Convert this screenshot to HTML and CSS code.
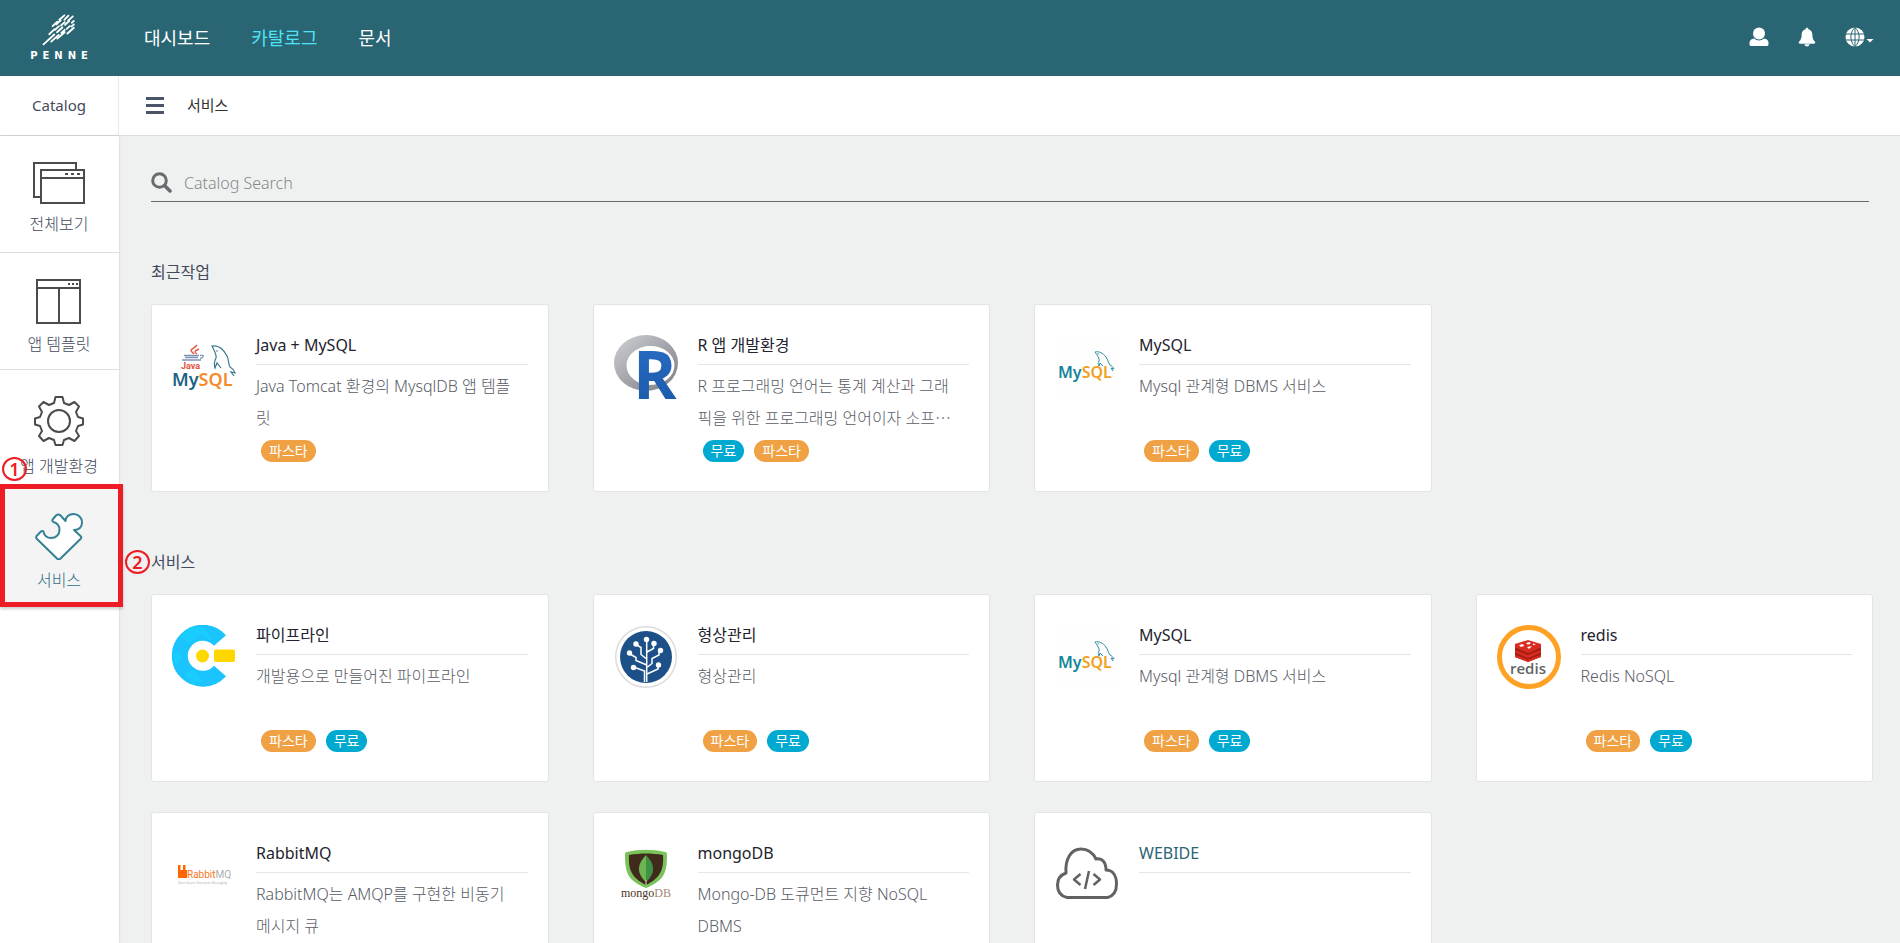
FILE: index.html
```html
<!DOCTYPE html>
<html lang="ko">
<head>
<meta charset="utf-8">
<meta name="viewport" content="width=device-width, initial-scale=1">
<title>PENNE Catalog</title>
<link rel="stylesheet" href="styles.css">
</head>
<body>
<header class="topbar">
  <a class="brand" href="#" aria-label="PENNE">
    <svg width="36" height="32" viewBox="130 40 104 95" fill="none" stroke="#fff" stroke-width="5.500" stroke-linecap="round" aria-hidden="true">
      <path d="M136 130l32-29M159 122l22-20M177 113l22-19M153 100l16-15M163 76l14-13M183 57l15-13M174 71l13-12M198 57l12-12M170 87l12-11M188 74l11-10M209 60l14-13M176 94l16-14M200 72l12-11M220 66l6-5M189 96l10-9M205 84l9-8M219 77l7-6M207 98l19-17"/>
    </svg>
    <span class="brand-name">PENNE</span>
  </a>
  <nav class="mainnav">
    <a href="#">대시보드</a>
    <a href="#" class="current">카탈로그</a>
    <a href="#">문서</a>
  </nav>
  <div class="tools">
    <button type="button" aria-label="사용자"><svg width="20" height="20" viewBox="0 0 20 20" fill="#fff"><circle cx="10" cy="6.500" r="6"/><path d="M5 11.500c3 2.600 7 2.600 10 0 3 .3 4.500 2 4.500 4.500v1.200c0 1-.7 1.800-1.700 1.800H2.200C1.200 19 .5 18.200.5 17.200V16c0-2.500 1.500-4.200 4.500-4.500z"/></svg></button>
    <button type="button" aria-label="알림"><svg width="18" height="20" viewBox="0 0 18 20" fill="#fff"><path d="M9 .8c.8 0 1.400.6 1.400 1.400 2.600.7 4 2.800 4 5.600 0 4 1.200 5.400 2.400 6.700.9 1 .3 2.300-.9 2.300H2.100c-1.200 0-1.800-1.300-.9-2.300 1.200-1.300 2.400-2.700 2.400-6.700 0-2.800 1.400-4.900 4-5.600C7.600 1.400 8.200.8 9 .8zM6.500 17.300h5c0 1.300-1.100 2.200-2.500 2.200s-2.500-.9-2.500-2.200z"/></svg></button>
    <button type="button" aria-label="언어"><svg width="29" height="20" viewBox="0 0 29 20"><circle cx="10" cy="10" r="9.500" fill="#fff"/><path d="M1 7h18M1 13h18M10 0v20M10 .5c-5.500 5-5.500 14 0 19M10 .5c5.500 5 5.500 14 0 19" fill="none" stroke="#2a6574" stroke-width="1"/><path d="M21.500 12h7L25 15.500z" fill="#fff"/></svg></button>
  </div>
</header>
<div class="subbar">
  <div class="subbar-label">Catalog</div>
  <button class="menu" type="button" aria-label="메뉴"><span></span><span></span><span></span></button>
  <h1>서비스</h1>
</div>
<div class="shell">
  <nav class="side">
    <a href="#">
      <svg width="52" height="42" viewBox="0 0 52 42" fill="none" stroke="#4b4b4b" stroke-width="2"><path d="M43 7V1H1v34h6M8 8h43v33H8zM8 16h43"/><path d="M32 12h3M38 12h3M44 12h3"/></svg>
      <span>전체보기</span>
    </a>
    <a href="#">
      <svg width="46" height="45" viewBox="0 0 46 45" fill="none" stroke="#4b4b4b" stroke-width="2"><path d="M1 1h43v43H1zM1 9h43M23 9v35"/><path d="M32 5h2M36 5h2M40 5h2"/></svg>
      <span>앱 템플릿</span>
    </a>
    <a href="#">
      <svg width="50" height="50" viewBox="0 0 50 50" fill="none" stroke="#4b4b4b" stroke-width="2" stroke-linejoin="round"><circle cx="25" cy="25" r="11"/><path d="M21.500 1h7l1.500 6 5 2 5.500-3 4.500 4.500-3 5.500 2 5 5 1.500v6L44 30l-2 5 3 5-4.500 5-5.500-3-5 2-1.500 5h-7L20 44l-5-2-5.500 3L5 40l3-5-2-5-5-1.500v-6L6 21l2-5-3-5.500L9.500 6 15 9l5-2z"/></svg>
      <span>앱 개발환경</span>
      <b class="mark mark-one">1</b>
    </a>
    <a href="#" class="active" aria-current="page">
      <svg width="48" height="47" viewBox="0 0 48 47" fill="#fff" stroke="#348094" stroke-width="2" stroke-linejoin="round"><path d="M21 2.500c1.500-1.500 3-1.500 4.500 0l5 5.500c0-4 3.500-7 8-7 5 0 8.500 4 8.500 8.500 0 5-3.500 7.500-8 7.500l6.500 6c1 1 1 2 0 3L25.500 45.500c-1 1-2.500 1-3.500 0L2 26c-1-1-1-2.500 0-3.500l4-4c1-1 2.500-.5 2.500.5 1 4 4 6 7.500 6 5 0 8.500-3.500 8.500-8 0-4-2.500-7-6-8-1.500-.5-1.500-2-.5-3z"/></svg>
      <span>서비스</span>
    </a>
  </nav>
  <main>
    <form class="search" role="search">
      <label for="q" aria-label="검색"><svg width="21" height="21" viewBox="0 0 21 21" fill="none" stroke="#686c6f"><circle cx="8.500" cy="8.500" r="6.800" stroke-width="3"/><path d="M13.500 13.500l5.500 5.500" stroke-width="3.500" stroke-linecap="round"/></svg></label>
      <input id="q" type="text" placeholder="Catalog Search">
    </form>
    <section>
      <h2>최근작업</h2>
      <div class="grid">
        <article class="card">
          <svg class="logo" viewBox="0 0 64 64" aria-hidden="true">
            <g fill="none" stroke="#e2553f" stroke-width="1.400"><path d="M25 10c-3 4-8 4-5 7l2 2M27 14c-5 2-5 3-2 5"/></g>
            <path d="M12 20.500h15M13 22.500h13M10 25h19M28 20.500c5-1 4 2 0 3" fill="none" stroke="#7f95b8" stroke-width="1.300"/>
            <text x="9" y="34" class="logo-java">Java</text>
            <text x="0" y="51" class="logo-mysql-lg"><tspan fill="#1c6284">My</tspan><tspan fill="#f68b2c">SQL</tspan></text>
            <path d="M44 23c-2 4-2 7-1 10l2-5 4 5M44 23c1-3-2-8-4-12 7-1 12 4 15 10 2 4 1 7 3 11 2 1 4 3 5 6l-4-1 3 4" fill="none" stroke="#3c7590" stroke-width="1.200"/>
            <circle cx="45" cy="16" r=".8" fill="#3c7590"/>
          </svg>
          <div class="body">
            <h3><a href="#">Java + MySQL</a></h3>
            <p>Java Tomcat 환경의 MysqlDB 앱 템플릿</p>
            <div class="tags"><span class="tag pasta">파스타</span></div>
          </div>
        </article>
        <article class="card">
          <svg class="logo" viewBox="0 0 64 64" aria-hidden="true">
            <linearGradient id="ring" x1="0" y1="0" x2="1" y2="1"><stop offset="0" stop-color="#cdd0d4"/><stop offset="1" stop-color="#7c7b82"/></linearGradient>
            <linearGradient id="blue" x1="0" y1="0" x2="0" y2="1"><stop offset="0" stop-color="#2a6fc9"/><stop offset="1" stop-color="#1a57a5"/></linearGradient>
            <path fill="url(#ring)" fill-rule="evenodd" d="M32 0a32 28 0 1 1 0 56a32 28 0 1 1 0-56zM36.500 11a24 19.500 0 1 0 0 39a24 19.500 0 1 0 0-39z"/>
            <text x="19" y="64" class="logo-r">R</text>
          </svg>
          <div class="body">
            <h3><a href="#">R 앱 개발환경</a></h3>
            <p>R 프로그래밍 언어는 통계 계산과 그래픽을 위한 프로그래밍 언어이자 소프⋯</p>
            <div class="tags"><span class="tag free">무료</span><span class="tag pasta">파스타</span></div>
          </div>
        </article>
        <article class="card">
          <svg class="logo" viewBox="0 0 64 64" aria-hidden="true">
            <rect width="64" height="64" fill="#fdfefd"/>
            <text x="3" y="43" class="logo-mysql"><tspan fill="#12869a">My</tspan><tspan fill="#f3a01f">SQL</tspan></text>
            <path d="M44 26c-1 2-1 3 0 5l1-3 3 3M44 26c1-2-2-6-4-9 4-1 8 1 11 5 2 3 2 5 4 8 2 1 3 2 4 4l-3-1 2 3" fill="none" stroke="#2a8fa3"/>
            <circle cx="43" cy="19" r=".7" fill="#2a8fa3"/>
          </svg>
          <div class="body">
            <h3><a href="#">MySQL</a></h3>
            <p>Mysql 관계형 DBMS 서비스</p>
            <div class="tags"><span class="tag pasta">파스타</span><span class="tag free">무료</span></div>
          </div>
        </article>
      </div>
    </section>
    <section>
      <h2>서비스<b class="mark mark-two">2</b></h2>
      <div class="grid">
        <article class="card">
          <svg class="logo" viewBox="0 0 64 64" aria-hidden="true">
            <path d="M48 15.500a23 23 0 1 0 0 30.500" fill="none" stroke="#1cc4fd" stroke-width="16"/>
            <path d="M8 12l10 6 10-9 12 7-8-14H18zM1 27l9 5-7 8zM12 49l10-4 8 11-9 3z" fill="#18d3ff" opacity=".7"/>
            <circle cx="30.500" cy="31" r="6.500" fill="#ffd700"/><rect x="42" y="24.500" width="21" height="12.500" rx="2" fill="#ffd700"/>
          </svg>
          <div class="body">
            <h3><a href="#">파이프라인</a></h3>
            <p>개발용으로 만들어진 파이프라인</p>
            <div class="tags"><span class="tag pasta">파스타</span><span class="tag free">무료</span></div>
          </div>
        </article>
        <article class="card">
          <svg class="logo" viewBox="0 0 64 64" aria-hidden="true">
            <circle cx="32" cy="32" r="30.300" fill="#fff" stroke="#dcdcdc" stroke-width="1.500"/><circle cx="32" cy="32" r="26" fill="#1d5088"/>
            <g fill="none" stroke="#fff" stroke-width="1.500"><path d="M32.700 57V16M30.500 57V46l-9.500-3.500M32.700 40L22 35.500v-3L16 29M32 33.500l-5-4v-7L22 19.500M33 27l6.500-3.500v-4M33.500 42l4.500-3.500v-5l7-3.500v-4M33 49l11-5v-3.500"/></g>
            <g fill="#fff"><circle cx="32.500" cy="14.500" r="2.700"/><circle cx="22" cy="19" r="2.700"/><circle cx="40" cy="18.500" r="2.700"/><circle cx="15.500" cy="28" r="2.700"/><circle cx="46.500" cy="25.500" r="2.700"/><circle cx="19.500" cy="42.500" r="2.700"/><circle cx="44.500" cy="40" r="2.700"/></g>
          </svg>
          <div class="body">
            <h3><a href="#">형상관리</a></h3>
            <p>형상관리</p>
            <div class="tags"><span class="tag pasta">파스타</span><span class="tag free">무료</span></div>
          </div>
        </article>
        <article class="card">
          <svg class="logo" viewBox="0 0 64 64" aria-hidden="true">
            <rect width="64" height="64" fill="#fdfefd"/>
            <text x="3" y="43" class="logo-mysql"><tspan fill="#12869a">My</tspan><tspan fill="#f3a01f">SQL</tspan></text>
            <path d="M44 26c-1 2-1 3 0 5l1-3 3 3M44 26c1-2-2-6-4-9 4-1 8 1 11 5 2 3 2 5 4 8 2 1 3 2 4 4l-3-1 2 3" fill="none" stroke="#2a8fa3"/>
            <circle cx="43" cy="19" r=".7" fill="#2a8fa3"/>
          </svg>
          <div class="body">
            <h3><a href="#">MySQL</a></h3>
            <p>Mysql 관계형 DBMS 서비스</p>
            <div class="tags"><span class="tag pasta">파스타</span><span class="tag free">무료</span></div>
          </div>
        </article>
        <article class="card">
          <svg class="logo" viewBox="0 0 64 64" aria-hidden="true">
            <circle cx="32" cy="32" r="29.500" fill="#fff" stroke="#ffa124" stroke-width="5"/>
            <path d="M18 20v12l13 5 13-5V20z" fill="#a41e11"/>
            <path d="M18 19l13-4 13 4v3.500L31 28l-13-5.500zM18 25l13 5 13-5v2.500L31 33l-13-5.500zM18 29.800l13 5 13-5v2L31 37l-13-5z" fill="#d82c20"/>
            <path d="M22 20l4-1 1 2-3 1zM29 18l4-1 .5 2-3 .5zM30 22l5-1-3 3zM36 18.500l3 .8-3 1z" fill="#fff"/>
            <text x="13" y="49" class="logo-redis">redis</text>
          </svg>
          <div class="body">
            <h3><a href="#">redis</a></h3>
            <p>Redis NoSQL</p>
            <div class="tags"><span class="tag pasta">파스타</span><span class="tag free">무료</span></div>
          </div>
        </article>
        <article class="card">
          <svg class="logo" viewBox="0 0 64 64" aria-hidden="true">
            <path d="M6 22h2.500v5H11v-5h2.500v5h1.500v8H6z" fill="#f60"/>
            <text x="15" y="35" class="logo-rabbit"><tspan fill="#f5761f">Rabbit</tspan><tspan fill="#a5b0ae">MQ</tspan></text>
            <text x="6" y="41" class="logo-small">Open Source Enterprise Messaging</text>
          </svg>
          <div class="body">
            <h3><a href="#">RabbitMQ</a></h3>
            <p>RabbitMQ는 AMQP를 구현한 비동기 메시지 큐</p>
          </div>
        </article>
        <article class="card">
          <svg class="logo" viewBox="0 0 64 64" aria-hidden="true">
            <path d="M13 9c12-3 26-3 38 0 2 0 2 2 2 4 0 18-4 25-21 32C15 38 11 31 11 13c0-2 0-4 2-4z" fill="#7ac25a"/>
            <path d="M15 12c11-2 23-2 34 0 1 15-3 23-17 30C18 35 14 27 15 12z" fill="#402a1b"/>
            <path d="M32 12c-9 9-10 18 0 27z" fill="#6cb552"/><path d="M32 12c9 9 10 18 0 27z" fill="#3f9143"/><path d="M32 37v5" stroke="#d8d2c4"/>
            <text x="7" y="54" class="logo-mongo"><tspan fill="#4a3628">mongo</tspan><tspan fill="#a58a73">DB</tspan></text>
          </svg>
          <div class="body">
            <h3><a href="#">mongoDB</a></h3>
            <p>Mongo-DB 도큐먼트 지향 NoSQL DBMS</p>
          </div>
        </article>
        <article class="card hovered">
          <svg class="logo" viewBox="0 0 64 64" fill="none" stroke="#626262" stroke-width="3" stroke-linejoin="round" aria-hidden="true">
            <path d="M12 54.500C5 53 2.500 48 2.500 42c0-6 3-10 8.500-12C10 16 16 6 26 6c7 0 12 4 15 10 6-1.500 10 3 10 11 7 0 10.500 6 10.500 14 0 7-3 12-9 13.500z"/>
            <path d="M25.500 31L19 36.500l6.500 5.500M38.500 31l6.500 5.500-6.500 5.500M34 28l-4 18" stroke-width="2.500"/>
          </svg>
          <div class="body">
            <h3><a href="#">WEBIDE</a></h3>
            <p></p>
          </div>
        </article>
      </div>
    </section>
  </main>
</div>
</body>
</html>
```
FILE: styles.css
```css
* { box-sizing: border-box; }
body {
  margin: 0;
  height: 100vh;
  display: flex;
  flex-direction: column;
  overflow: hidden;
  background: #eff1f1;
  color: #444b5c;
  font: 400 16px/24px "Noto Sans", "Noto Sans CJK KR", sans-serif;
}
a { color: inherit; text-decoration: none; }
button { border: 0; padding: 0; background: none; cursor: pointer; }
svg { display: block; }
h1, h2, h3, p { margin: 0; font-size: 16px; font-weight: 400; }

.topbar {
  flex: none;
  display: flex;
  align-items: center;
  height: 76px;
  padding-right: 26px;
  background: #2a6574;
  color: #fff;
}
.brand {
  width: 118px;
  display: flex;
  flex-direction: column;
  align-items: center;
}
.brand-name {
  padding-left: 5px;
  font: 700 10px/14px "DejaVu Sans", sans-serif;
  letter-spacing: 5px;
  margin-top: 3px;
}
.mainnav { display: flex; gap: 41px; padding-left: 26px; font-size: 18px; }
.mainnav .current { color: #4fe3f5; }
.tools { display: flex; gap: 29px; margin-left: auto; padding-bottom: 3px; align-items: center; }

.subbar {
  flex: none;
  display: flex;
  align-items: center;
  height: 60px;
  background: #fff;
  border-bottom: 1px solid #dcdfdf;
}
.subbar-label {
  width: 119px;
  align-self: stretch;
  display: flex;
  align-items: center;
  justify-content: center;
  padding-bottom: 2px;
  border-right: 1px solid #e8eaea;
  font-size: 15px;
}
.menu { display: flex; flex-direction: column; gap: 4px; margin: 0 23px 0 27px; }
.menu span { width: 18px; height: 3px; background: #4a5568; }
.subbar h1 { padding-bottom: 2px; font-size: 15px; color: #333; }

.shell { flex: 1; min-height: 0; display: flex; }
.side { flex: none; width: 119px; background: #fff; box-shadow: 0 0 2px rgba(0, 0, 0, .2); z-index: 1; }
.side a {
  position: relative;
  display: flex;
  flex-direction: column;
  align-items: center;
  gap: 8px;
  height: 117px;
  padding: 26px 1px 0 0;
  border-bottom: 1px solid #dcdfdf;
  font-weight: 300;
}
.side .active { background: #f4f4f4; color: #2a6f82; }
.side .active::after {
  content: "";
  position: absolute;
  inset: -3px -4px -4px 0;
  border: 5px solid #ee1c24;
  box-shadow: 0 2px 3px rgba(0, 0, 0, .2);
}
.mark {
  position: absolute;
  width: 25px;
  height: 24px;
  border: 2px solid #ee1c24;
  border-radius: 50%;
  color: #ee1c24;
  font: 600 18px/20px "Noto Sans", sans-serif;
  text-align: center;
}
.mark-one { left: 2px; top: 87px; }
.mark-two { right: 100%; top: 0; margin-right: 1px; }

main { flex: 1; min-width: 0; padding: 30px 27px 30px 32px; overflow: hidden; }
.search {
  display: flex;
  align-items: center;
  gap: 12px;
  height: 36px;
  margin-right: 4px;
  padding-bottom: 2px;
  border-bottom: 1px solid #686c6f;
}
.search input {
  flex: 1;
  border: 0;
  outline: 0;
  padding: 0;
  background: none;
  font: inherit;
  font-weight: 300;
}
.search input::placeholder { color: #84888b; opacity: 1; }
section { padding-top: 58px; }
h2 { position: relative; width: max-content; margin-bottom: 20px; }
.grid { display: grid; grid-template-columns: repeat(4, minmax(0, 1fr)); gap: 30px 44px; }
.card {
  display: flex;
  gap: 20px;
  min-height: 188px;
  padding: 30px 20px 29px;
  background: #fff;
  border: 1px solid #e3e5e5;
  border-radius: 3px;
}
.logo { flex: none; width: 64px; height: 64px; }
.body { flex: 1; min-width: 0; }
.card h3 {
  line-height: 20px;
  padding-bottom: 9px;
  border-bottom: 1px solid #e4e6e8;
  color: #23232e;
}
.hovered h3 { color: #2a6574; }
.card p {
  margin: 5px 0 6px;
  padding-right: 10px;
  min-height: 64px;
  line-height: 32px;
  font-weight: 300;
  color: #585c66;
}
.tags { display: flex; gap: 10px; padding-left: 5px; }
.tag {
  padding: 0 8px;
  border-radius: 11px;
  color: #fff;
  font-size: 14px;
  line-height: 22px;
}
.pasta { background: #f0a144; }
.free { background: #00a9cf; }

.logo-mysql { font: 600 16px "Noto Sans", sans-serif; }
.logo-mysql-lg { font: 600 18px "Noto Sans", sans-serif; }
.logo-java { font: 700 9px "Roboto", sans-serif; fill: #e2553f; }
.logo-r { font: 700 66px "Open Sans", sans-serif; fill: url(#blue); }
.logo-redis { font: 600 15px "Open Sans", sans-serif; fill: #636466; }
.logo-rabbit { font: 400 10px "Roboto", sans-serif; }
.logo-small { font: 400 3px "Open Sans", sans-serif; fill: #aaa; }
.logo-mongo { font: 400 12px "Liberation Serif", serif; }
```
